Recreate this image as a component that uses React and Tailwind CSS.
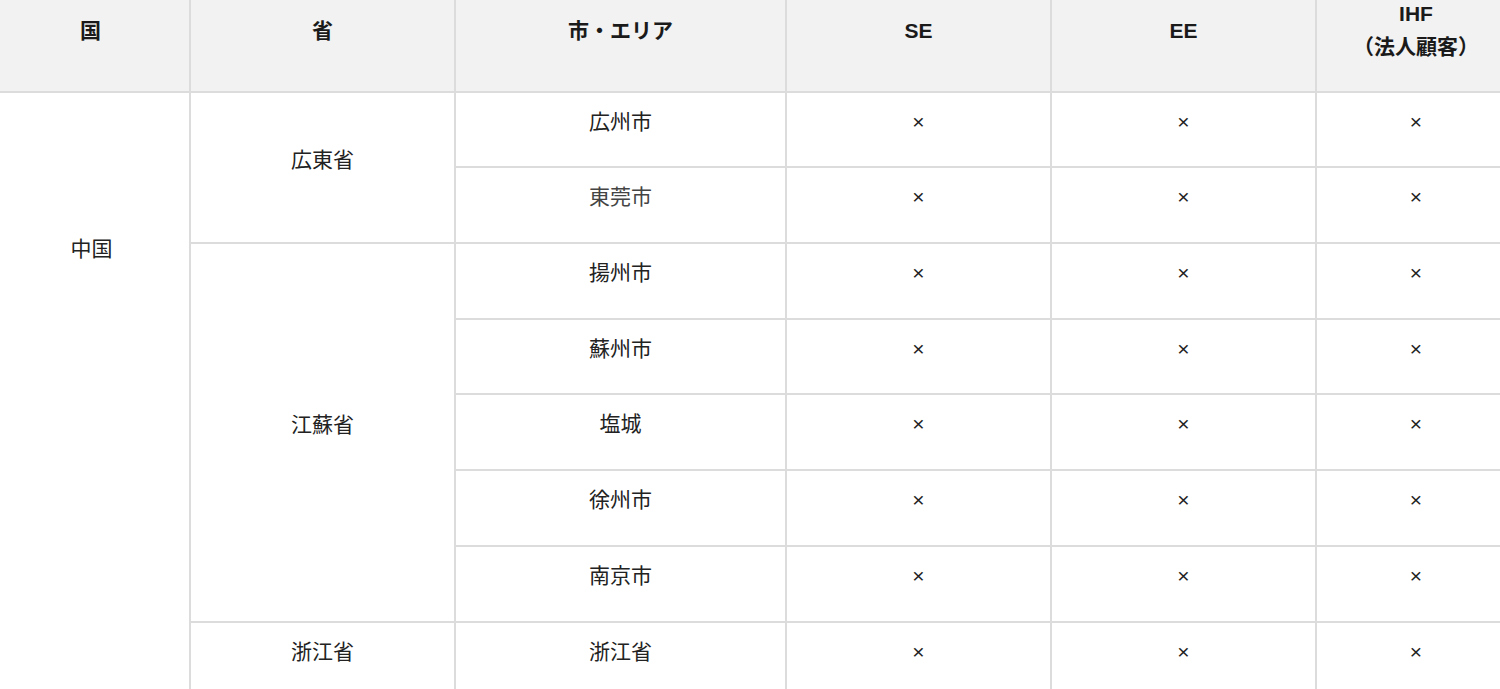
import React from "react";

const rows = [
  { prov: "広東省", provSpan: 2, city: "広州市", h: "h-[75px]" },
  { city: "東莞市", light: true, h: "h-[76px]" },
  { prov: "江蘇省", provSpan: 5, city: "揚州市", h: "h-[76px]" },
  { city: "蘇州市", h: "h-[75px]" },
  { city: "塩城", h: "h-[76px]" },
  { city: "徐州市", h: "h-[76px]" },
  { city: "南京市", h: "h-[76px]" },
  { prov: "浙江省", provSpan: 1, city: "浙江省", h: "h-[76px]" },
];

const font = { fontFamily: '"Liberation Sans", "Noto Sans CJK JP", sans-serif' };

export default function App() {
  const th =
    "border-b-2 border-r-2 border-[#dcdcdc] bg-[#f2f2f2] text-center align-middle pb-[15px] font-bold text-[21px] leading-[33px] text-[#1a1a1a]";
  const td =
    "border-b-2 border-r-2 border-[#dcdcdc] text-center align-middle pb-[16px] text-[21px] leading-[30px] text-[#222]";
  return (
    <div className="w-[1500px] h-[689px] overflow-hidden bg-white" style={font}>
      <table className="table-fixed border-collapse w-[1516px] -mt-[16px]">
        <colgroup>
          <col className="w-[190px]" />
          <col className="w-[265px]" />
          <col className="w-[331px]" />
          <col className="w-[265px]" />
          <col className="w-[265px]" />
          <col className="w-[200px]" />
        </colgroup>
        <thead>
          <tr className="h-[108px]">
            <th className={th + " pr-[8px]"}>国</th>
            <th className={th}>省</th>
            <th className={th}>市・エリア</th>
            <th className={th}>SE</th>
            <th className={th}>EE</th>
            <th className={th + " border-r-0"}>
              IHF
              <br />
              （法人顧客）
            </th>
          </tr>
        </thead>
        <tbody>
          {rows.map((r, i) => (
            <tr key={i} className={r.h}>
              {i === 0 && (
                <td
                  rowSpan={8}
                  className="border-r-2 border-[#dcdcdc] text-center align-top pt-[141px] pr-[6px] text-[21px] leading-[30px] text-[#222]"
                >
                  中国
                </td>
              )}
              {r.prov && (
                <td rowSpan={r.provSpan} className={td}>
                  {r.prov}
                </td>
              )}
              <td className={td + (r.light ? " text-[#444]" : "")}>{r.city}</td>
              <td className={td}>×</td>
              <td className={td}>×</td>
              <td className={td + " border-r-0"}>×</td>
            </tr>
          ))}
        </tbody>
      </table>
    </div>
  );
}
